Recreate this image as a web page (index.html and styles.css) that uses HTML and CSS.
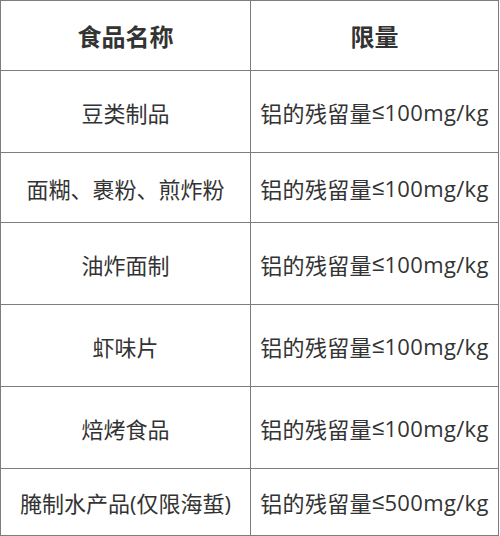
FILE: index.html
```html
<!DOCTYPE html>
<html lang="zh-CN">
<head>
<meta charset="utf-8">
<title>食品铝限量</title>
<link rel="stylesheet" href="styles.css">
</head>
<body>
<div class="grid">
  <div class="cell head">食品名称</div>
  <div class="cell head">限量</div>
  <div class="cell">豆类制品</div>
  <div class="cell">铝的残留量<span class="le">≤</span>100mg/kg</div>
  <div class="cell">面糊、裹粉、煎炸粉</div>
  <div class="cell">铝的残留量<span class="le">≤</span>100mg/kg</div>
  <div class="cell">油炸面制</div>
  <div class="cell">铝的残留量<span class="le">≤</span>100mg/kg</div>
  <div class="cell">虾味片</div>
  <div class="cell">铝的残留量<span class="le">≤</span>100mg/kg</div>
  <div class="cell">焙烤食品</div>
  <div class="cell">铝的残留量<span class="le">≤</span>100mg/kg</div>
  <div class="cell">腌制水产品(仅限海蜇)</div>
  <div class="cell">铝的残留量<span class="le">≤</span>500mg/kg</div>
</div>
</body>
</html>
```
FILE: styles.css
```css
html, body {
  margin: 0;
  padding: 0;
  background: #fff;
}
.grid {
  display: grid;
  grid-template-columns: 249px 247px;
  grid-template-rows: 69px 81px 69px 81px 81px 81px 66px;
  gap: 1px;
  padding: 1px;
  width: max-content;
  background: #7d7d7d;
}
.cell {
  background: #fff;
  display: flex;
  align-items: center;
  justify-content: center;
  font-family: "Open Sans", "Noto Sans CJK SC", sans-serif;
  font-size: 22px;
  color: #333;
  white-space: nowrap;
}
.cell:nth-child(even) {
  letter-spacing: 0.35px;
}
.head {
  font-size: 24px;
  font-weight: bold;
}
.head:nth-child(even) {
  letter-spacing: 0;
}
.le {
  font-family: "Liberation Sans", sans-serif;
}
```
